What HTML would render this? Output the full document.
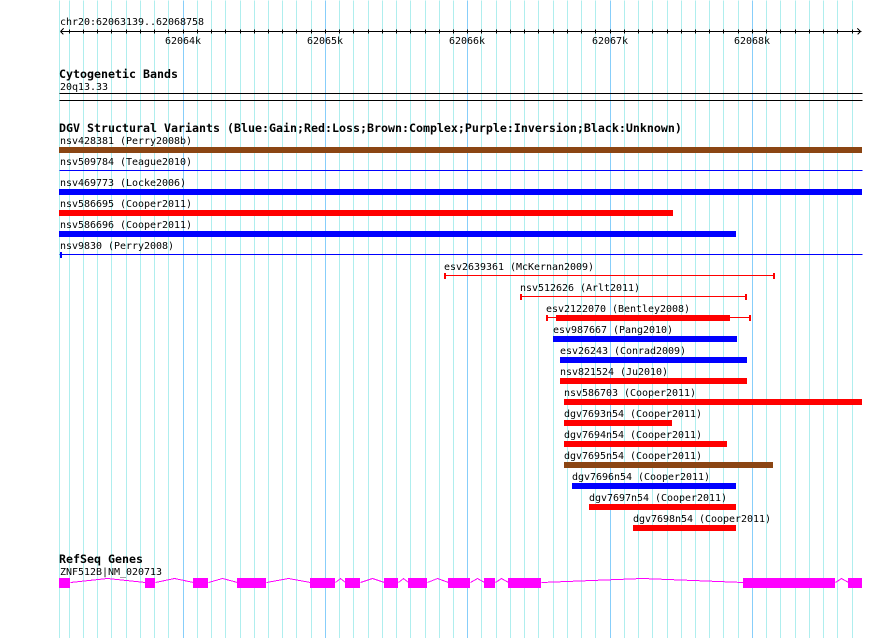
<!DOCTYPE html>
<html>
<head>
<meta charset="utf-8">
<title>chr20:62063139..62068758</title>
<style>
html,body{margin:0;padding:0;background:#fff;width:890px;height:638px;overflow:hidden}
svg{display:block}
text{font-family:"DejaVu Sans Mono","Liberation Mono",monospace;font-size:10px;letter-spacing:-.02px;fill:#000;white-space:pre}
text.b{font-size:11.63px;letter-spacing:0;font-weight:bold}
</style>
</head>
<body>
<svg width="890" height="638" viewBox="0 0 890 638" xmlns="http://www.w3.org/2000/svg">
<g shape-rendering="crispEdges" fill="none" transform="translate(.5 .5)">
<path stroke="#afeeee" d="M59 0V638M69 0V638M83 0V638M97 0V638M111 0V638M126 0V638M140 0V638M154 0V638M168 0V638M197 0V638M211 0V638M225 0V638M240 0V638M254 0V638M268 0V638M282 0V638M296 0V638M311 0V638M339 0V638M353 0V638M368 0V638M382 0V638M396 0V638M410 0V638M425 0V638M439 0V638M453 0V638M481 0V638M496 0V638M510 0V638M524 0V638M538 0V638M553 0V638M567 0V638M581 0V638M595 0V638M624 0V638M638 0V638M652 0V638M667 0V638M681 0V638M695 0V638M709 0V638M723 0V638M738 0V638M766 0V638M780 0V638M795 0V638M809 0V638M823 0V638M837 0V638M852 0V638"/>
<path stroke="#87cefa" d="M183 0V638M325 0V638M467 0V638M610 0V638M752 0V638"/>
<path stroke="#000" d="M60 31H861M60 31L63 28M60 31L63 34M860 31L857 28M860 31L857 34M69 29V33M83 29V33M97 29V33M111 29V33M126 29V33M140 29V33M154 29V33M168 29V33M183 29V33M197 29V33M211 29V33M225 29V33M240 29V33M254 29V33M268 29V33M282 29V33M296 29V33M311 29V33M325 29V33M339 29V33M353 29V33M368 29V33M382 29V33M396 29V33M410 29V33M425 29V33M439 29V33M453 29V33M467 29V33M481 29V33M496 29V33M510 29V33M524 29V33M538 29V33M553 29V33M567 29V33M581 29V33M595 29V33M610 29V33M624 29V33M638 29V33M652 29V33M667 29V33M681 29V33M695 29V33M709 29V33M723 29V33M738 29V33M752 29V33M766 29V33M780 29V33M795 29V33M809 29V33M823 29V33M837 29V33M852 29V33"/>
<path stroke="#000" d="M59 93H862M59 100H862"/>
<path stroke="#00f" d="M59 170H862M59 254H862"/>
<path stroke="#f00" d="M444 275H774M520 296H746M546 317H750"/>
<path stroke="#f0f" d="M70 582L107 578L145 582M155 582L174 578L193 582M208 582L222 578L237 582M266 582L288 578L310 582M335 582L340 578L345 582M360 582L372 578L384 582M398 582L403 578L408 582M427 582L437 578L448 582M470 582L477 578L484 582M495 582L501 578L508 582M541 582L642 578L743 582M835 582L841 578L848 582"/>
</g>
<g shape-rendering="crispEdges">
<rect x="60" y="252" width="2" height="6" fill="#00f"/>
<rect x="59" y="147" width="803" height="6" fill="#8b4513"/>
<rect x="59" y="189" width="803" height="6" fill="#00f"/>
<rect x="59" y="210" width="614" height="6" fill="#f00"/>
<rect x="59" y="231" width="677" height="6" fill="#00f"/>
<g fill="#f00">
<rect x="444" y="273" width="2" height="6"/><rect x="773" y="273" width="2" height="6"/>
<rect x="520" y="294" width="2" height="6"/><rect x="745" y="294" width="2" height="6"/>
<rect x="546" y="315" width="2" height="6"/><rect x="749" y="315" width="2" height="6"/>
<rect x="556" y="315" width="174" height="6"/>
<rect x="560" y="378" width="187" height="6"/>
<rect x="564" y="399" width="298" height="6"/>
<rect x="564" y="420" width="108" height="6"/>
<rect x="564" y="441" width="163" height="6"/>
<rect x="589" y="504" width="147" height="6"/>
<rect x="633" y="525" width="103" height="6"/>
</g>
<rect x="553" y="336" width="184" height="6" fill="#00f"/>
<rect x="560" y="357" width="187" height="6" fill="#00f"/>
<rect x="564" y="462" width="209" height="6" fill="#8b4513"/>
<rect x="572" y="483" width="164" height="6" fill="#00f"/>
<g fill="#f0f">
<rect x="59" y="578" width="11" height="10"/>
<rect x="145" y="578" width="10" height="10"/>
<rect x="193" y="578" width="15" height="10"/>
<rect x="237" y="578" width="29" height="10"/>
<rect x="310" y="578" width="25" height="10"/>
<rect x="345" y="578" width="15" height="10"/>
<rect x="384" y="578" width="14" height="10"/>
<rect x="408" y="578" width="19" height="10"/>
<rect x="448" y="578" width="22" height="10"/>
<rect x="484" y="578" width="11" height="10"/>
<rect x="508" y="578" width="33" height="10"/>
<rect x="743" y="578" width="92" height="10"/>
<rect x="848" y="578" width="14" height="10"/>
</g>
</g>
<text x="60" y="25">chr20:62063139..62068758</text>
<text x="165" y="44">62064k</text>
<text x="307" y="44">62065k</text>
<text x="449" y="44">62066k</text>
<text x="592" y="44">62067k</text>
<text x="734" y="44">62068k</text>
<text class="b" x="59" y="78">Cytogenetic Bands</text>
<text x="60" y="90">20q13.33</text>
<text class="b" x="59" y="132">DGV Structural Variants (Blue:Gain;Red:Loss;Brown:Complex;Purple:Inversion;Black:Unknown)</text>
<text x="60" y="144">nsv428381 (Perry2008b)</text>
<text x="60" y="165">nsv509784 (Teague2010)</text>
<text x="60" y="186">nsv469773 (Locke2006)</text>
<text x="60" y="207">nsv586695 (Cooper2011)</text>
<text x="60" y="228">nsv586696 (Cooper2011)</text>
<text x="60" y="249">nsv9830 (Perry2008)</text>
<text x="444" y="270">esv2639361 (McKernan2009)</text>
<text x="520" y="291">nsv512626 (Arlt2011)</text>
<text x="546" y="312">esv2122070 (Bentley2008)</text>
<text x="553" y="333">esv987667 (Pang2010)</text>
<text x="560" y="354">esv26243 (Conrad2009)</text>
<text x="560" y="375">nsv821524 (Ju2010)</text>
<text x="564" y="396">nsv586703 (Cooper2011)</text>
<text x="564" y="417">dgv7693n54 (Cooper2011)</text>
<text x="564" y="438">dgv7694n54 (Cooper2011)</text>
<text x="564" y="459">dgv7695n54 (Cooper2011)</text>
<text x="572" y="480">dgv7696n54 (Cooper2011)</text>
<text x="589" y="501">dgv7697n54 (Cooper2011)</text>
<text x="633" y="522">dgv7698n54 (Cooper2011)</text>
<text class="b" x="59" y="563">RefSeq Genes</text>
<text x="60" y="575">ZNF512B|NM_020713</text>
</svg>
</body>
</html>
